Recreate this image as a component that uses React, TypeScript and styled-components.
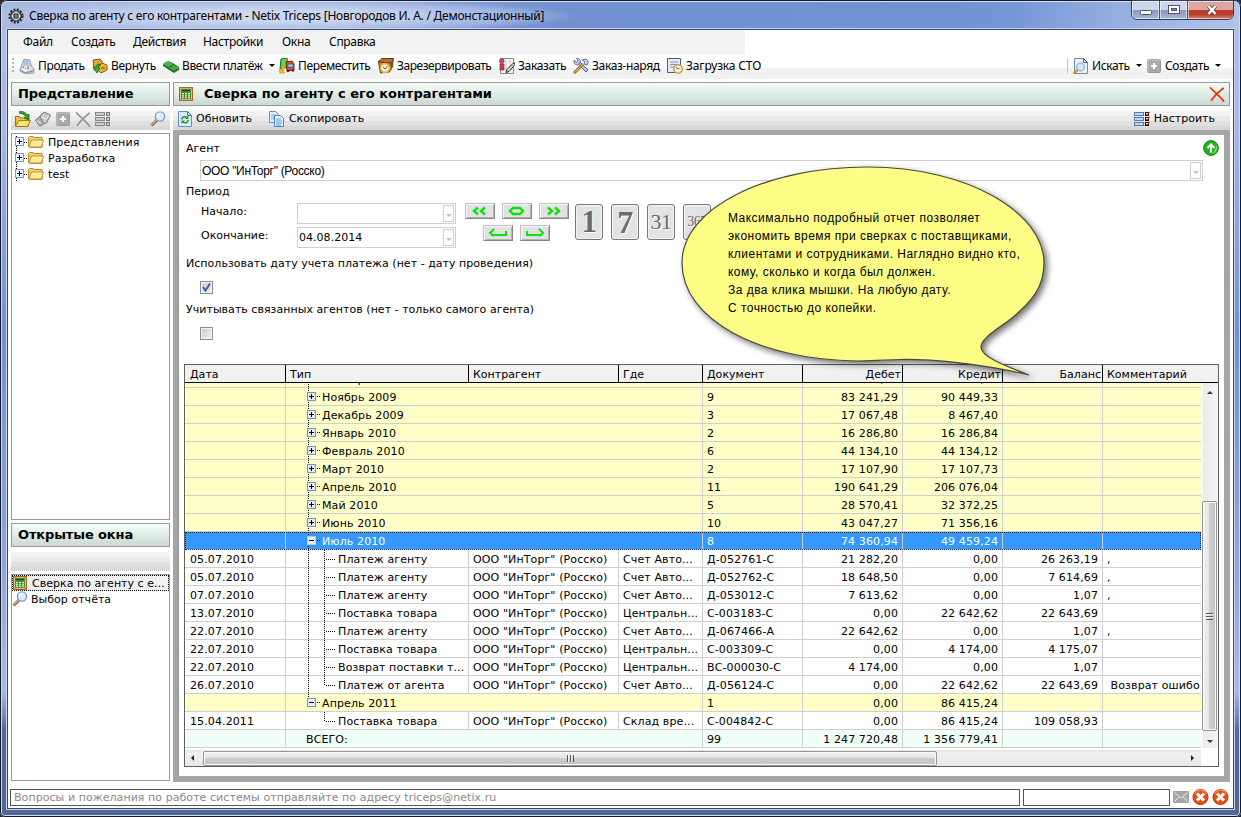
import React from 'react';
import styled, { createGlobalStyle, css } from 'styled-components';

const verdana = `'DejaVu Sans', Verdana, sans-serif`;
const segoe = `'Noto Sans', 'Segoe UI', sans-serif`;

const GlobalStyle = createGlobalStyle`
  *, *::before, *::after { box-sizing: border-box; }
  body { margin: 0; overflow: hidden; font: 11px/16px ${verdana}; letter-spacing: 0.03px; color: #000; }
  svg { display: block; flex: none; }
`;

/* ---------- window frame ---------- */
const Frame = styled.div`
  position: relative;
  width: 1241px;
  height: 817px;
  display: flex;
  flex-direction: column;
  background: linear-gradient(180deg, #afbfe6 0, #a7b9e4 120px, #7290d4 330px, #8ea6da 560px, #a9badd 690px, #52699b 730px, #526894 817px);
  border: 1px solid #141828;
  border-radius: 7px 7px 5px 5px;
  box-shadow: inset 0 0 0 1px #cfdaf2, 0 0 0 6px #20253a;
`;
const TitleBar = styled.header`
  height: 28px;
  margin: 0 1px;
  padding-left: 6px;
  display: flex;
  align-items: center;
  border-top: 1px solid #d8e2f6;
  border-radius: 6px 6px 0 0;
  background:
    linear-gradient(100deg, transparent 82%, #ffffff20 88%, #ffffff50 100%),
    radial-gradient(ellipse 310px 17px at 270px 14px, #ccd7f0 30%, #bccaeb90 78%, transparent 100%),
    linear-gradient(90deg, #a9b9e0 0, #92a8dc 340px, #7090d0 560px, #7193d4 960px, #8ea8de 100%);
`;
const TitleText = styled.div`
  flex: 1;
  padding-left: 5px;
  font: 12px/20px ${segoe};
  letter-spacing: -0.24px;
  white-space: nowrap;
`;
const WindowButtons = styled.div`
  display: flex;
  align-self: flex-start;
  width: 103px;
  height: 20px;
  margin: -2px 5px 0 0;
  border: 1px solid #343f58;
  border-radius: 0 0 6px 6px;
  overflow: hidden;
`;
const WindowButton = styled.div<{ $close?: boolean }>`
  width: ${p => (p.$close ? 47 : 28)}px;
  flex: none;
  display: grid;
  place-items: center;
  border-right: ${p => (p.$close ? 0 : '1px solid #46536f')};
  box-shadow: inset 0 0 0 1px #ffffff90;
  background: ${p =>
    p.$close
      ? 'linear-gradient(#dda79f 0 48%, #c0392b 50%, #b9402d 75%, #d88468)'
      : 'linear-gradient(#cdd6ea 0 48%, #8797bb 50%, #a9b8d8)'};
`;
const Client = styled.div`
  height: 780px;
  margin: 0 6px 0 6px;
  display: flex;
  flex-direction: column;
  background: #fff;
  border: 1px solid #3b4766;
  box-shadow: 0 0 0 1px #c6d2ee;
`;

/* ---------- menu and main toolbar ---------- */
const MenuBar = styled.nav`
  width: 737px;
  height: 24px;
  display: flex;
  background: #f2f2f2;
  font: 12px/24px ${segoe};
  letter-spacing: -0.3px;
  padding-left: 15px;
`;
const MenuItem = styled.div<{ $w: number }>`
  width: ${p => p.$w}px;
  white-space: nowrap;
`;
const MainToolbar = styled.div`
  height: 25px;
  display: flex;
  align-items: center;
  padding: 0 0 2px 4px;
  background: linear-gradient(#fff 0 14px, #f2f2f2 14px);
`;
const Grip = styled.div`
  width: 2px;
  height: 16px;
  margin-right: 5px;
  background: repeating-linear-gradient(#b4b4b4 0 2px, transparent 2px 4px);
`;
const ToolButton = styled.div<{ $w: number; $ls?: number }>`
  width: ${p => p.$w}px;
  height: 22px;
  display: flex;
  align-items: center;
  gap: 3px;
  font: 12px/22px ${segoe};
  letter-spacing: ${p => p.$ls ?? -0.35}px;
  white-space: nowrap;
`;
const Caret = styled.i`
  margin-left: 3px;
  border: 3px solid transparent;
  border-top-color: #000;
  border-bottom: 0;
`;
const Divider = styled.div`
  width: 1px;
  height: 16px;
  margin: 0 5px 0 auto;
  background: #c4c4c4;
`;

/* ---------- panels ---------- */
const Workspace = styled.main`
  display: flex;
  gap: 3px;
  padding: 3px 3px 0;
`;
const Column = styled.section<{ $w: number }>`
  width: ${p => p.$w}px;
  height: 700px;
  display: flex;
  flex-direction: column;
`;
const PanelHeader = styled.h2<{ $flush?: boolean }>`
  height: 24px;
  margin: 0 0 5px;
  padding: 0 ${p => (p.$flush ? '4px 0 5px' : '6px')};
  display: flex;
  flex: none;
  align-items: center;
  gap: 11px;
  border: 1px solid #999;
  background: linear-gradient(#f2fdf9, #eaf5f0 25%, #cbd8d1);
  font: bold 13px/22px ${verdana};
  letter-spacing: ${p => (p.$flush ? -0.02 : -0.12)}px;
  white-space: nowrap;
`;
const PanelTools = styled.div<{ $left?: number }>`
  height: 19px;
  display: flex;
  flex: none;
  align-items: center;
  gap: 4px;
  padding: 0 4px 3px ${p => p.$left ?? 4}px;
  background: linear-gradient(#f3f3f3 0 5px, #ebebeb 5px 10px, #e0e0e0 10px 15px, #d8d8d8 15px);
`;
const Spacer = styled.div`flex: 1;`;
const ToolLabel = styled.span<{ $gap?: number }>`
  margin-right: ${p => p.$gap ?? 0}px;
  letter-spacing: 0;
`;
const ListBox = styled.div<{ $h: number }>`
  height: ${p => p.$h}px;
  flex: none;
  margin: 3px 0;
  border: 1px solid #9a9a9a;
  background: #fff;
  &:last-child { margin-bottom: 0; }
`;
const FolderRow = styled.div`
  height: 16px;
  display: flex;
  align-items: center;
  padding-left: 3px;
  letter-spacing: 0.1px;
  span { padding: 1px 0 0 3px; }
`;
const OpenItem = styled.div<{ $active?: boolean }>`
  height: 16px;
  display: flex;
  align-items: center;
  gap: ${p => (p.$active ? 5 : 3)}px;
  line-height: 15px;
  white-space: nowrap;
  ${p => p.$active && css`
    background: #f0f0f0;
    border: 1px dotted #000;
  `}
`;
const ReportFrame = styled.div`
  flex: 1;
  padding: 5px 6px 6px 5px;
  background: #a6a6a6;
`;
const ReportBody = styled.div`
  height: 641px;
  padding: 0 5px 0 6px;
  border: 1px solid #8f8f8f;
  border-width: 0 0 0 1px;
  background: #fff;
`;

/* ---------- form ---------- */
const Line = styled.div<{ $h: number; $indent?: number }>`
  height: ${p => p.$h}px;
  display: flex;
  align-items: center;
  padding-left: ${p => p.$indent ?? 1}px;
  white-space: nowrap;
`;
const FieldLabel = styled.span`padding-top: 2px;`;
const Combo = styled.div<{ $w: number }>`
  width: ${p => p.$w}px;
  height: 21px;
  display: flex;
  align-items: center;
  justify-content: space-between;
  padding: 0 1px;
  border: 1px solid #cfcfcf;
  background: #fff;
`;
const AgentValue = styled.span`
  font: 12px/18px 'Liberation Sans', Arial, sans-serif;
  letter-spacing: -0.3px;
`;
const DropButton = styled.span`
  width: 11px;
  height: 17px;
  display: grid;
  place-items: center;
  border: 1px solid #cfcfcf;
  &::after {
    content: '';
    margin-top: 4px;
    border: 3px solid transparent;
    border-top-color: #c4c4c4;
    border-bottom: 0;
  }
`;
const PeriodBlock = styled.div`
  height: 47px;
  display: flex;
`;
const DateFields = styled.div`
  width: 287px;
  display: grid;
  grid-template-columns: 112px 159px;
  grid-auto-rows: 24px;
`;
const DateLabel = styled.span`
  padding-left: 16px;
  line-height: 18px;
`;
const StepButtons = styled.div`
  width: 105px;
  display: flex;
  flex-wrap: wrap;
  justify-content: center;
  align-content: flex-start;
  gap: 6px 7px;
  margin-left: -8px;
`;
const StepButton = styled.button`
  width: 30px;
  height: 16px;
  padding: 0;
  display: grid;
  place-items: center;
  background: #e2e2e2;
  border: 1px solid;
  border-color: #c0c0c0 #858585 #858585 #c0c0c0;
  box-shadow: inset 1px 1px #f6f6f6, inset -1px -1px #b4b4b4;
`;
const DayButtons = styled.div`
  display: flex;
  gap: 8px;
  padding: 1px 0 0 6px;
`;
const DayButton = styled.div<{ $size: number; $bold?: boolean }>`
  width: 28px;
  height: 36px;
  display: grid;
  place-items: center;
  border: 1px solid #777;
  border-radius: 3px;
  background: #e3e3e3;
  box-shadow: inset 0 0 0 1px #f4f4f4;
  font: ${p => (p.$bold ? 'bold' : 'normal')} ${p => p.$size}px/30px 'Liberation Serif', serif;
  color: #6a6a6a;
  text-shadow: 1px 1px #fff;
  letter-spacing: -0.5px;
`;
const CheckBox = styled.span`
  width: 13px;
  height: 13px;
  display: grid;
  place-items: center;
  border: 1px solid #8e8f8f;
  box-shadow: inset 0 0 0 1px #f4f4f4;
  background: linear-gradient(135deg, #c4cad0, #f2f4f6);
`;

/* ---------- table ---------- */
const Table = styled.div`
  width: 1035px;
  height: 403px;
  margin: 22px 0 0 -1px;
  border: 1px solid #606060;
  background: #fff;
`;
const columns = css`
  display: grid;
  grid-template-columns: 101px 183px 150px 84px 100px 100px 100px 100px 1fr;
`;
const HeadRow = styled.div`
  ${columns}
  height: 18px;
  background: #f1f1f1;
  border-bottom: 1px solid #000;
`;
const HeadCell = styled.div<{ $right?: boolean; $last?: boolean }>`
  padding: 1px ${p => (p.$right ? 1 : 4)}px 0 4px;
  line-height: 17px;
  text-align: ${p => (p.$right ? 'right' : 'left')};
  border-right: ${p => (p.$last ? 0 : '1px solid #000')};
  &:first-child { padding-left: 5px; }
`;
const Viewport = styled.div`
  display: flex;
  height: 365px;
`;
const Rows = styled.div`
  width: 1016px;
  overflow: hidden;
  display: flex;
  flex-direction: column;
  justify-content: flex-end;
`;
type Kind = 'group' | 'item' | 'selected' | 'total';
const rowBg: Record<Kind, string> = { group: '#ffffc8', item: '#fff', selected: '#3399ff', total: '#f1fff9' };
const DataRow = styled.div<{ $kind: Kind }>`
  ${columns}
  height: 18px;
  flex: none;
  background: ${p => rowBg[p.$kind]};
  color: ${p => (p.$kind === 'selected' ? '#fff' : '#000')};
  ${p => p.$kind === 'selected' && css`
    outline: 1px dotted #10243c;
    outline-offset: -1px;
  `}
`;
const Cell = styled.div<{ $right?: boolean; $span?: number }>`
  grid-column: span ${p => p.$span ?? 1};
  height: 18px;
  min-width: 0;
  padding: 0 4px;
  display: flex;
  justify-content: ${p => (p.$right ? 'flex-end' : 'flex-start')};
  line-height: 19px;
  letter-spacing: 0.11px;
  white-space: pre;
  overflow: hidden;
  border-right: 1px solid #cfcfcf;
  border-bottom: 1px solid #cfcfcf;
  &:first-child { padding-left: 5px; }
  &:last-child { border-right: 0; padding-right: 0; }
`;
const TypeCell = styled(Cell)`padding-left: 0;`;
const TotalLabel = styled.span`padding-left: 20px;`;
const VScroll = styled.div`
  width: 17px;
  padding: 0 1px;
  display: flex;
  flex-direction: column;
  align-items: center;
  background: linear-gradient(90deg, #fff 1px, #ececec 2px, #f4f4f4);
`;
const HScroll = styled.div`
  width: 1016px;
  height: 16px;
  margin-top: 2px;
  display: flex;
  align-items: center;
  background: linear-gradient(#e4e4e4, #f0f0f0 3px, #e9e9e9);
`;
const Arrow = styled.i<{ $dir: 'up' | 'down' | 'left' | 'right' }>`
  width: 0;
  height: 0;
  flex: none;
  border: 3px solid transparent;
  ${p => p.$dir === 'up' && 'margin: 8px 0 107px; border-width: 0 3px 3px; border-bottom-color: #333;'}
  ${p => p.$dir === 'down' && 'margin: 9px 0 0; border-width: 3px 3px 0; border-top-color: #333;'}
  ${p => p.$dir === 'left' && 'margin: 0 9px 0 6px; border-width: 3px 3px 3px 0; border-right-color: #222;'}
  ${p => p.$dir === 'right' && 'margin: 0 7px 0 auto; border-width: 3px 0 3px 3px; border-left-color: #222;'}
`;
const Thumb = styled.div<{ $vertical?: boolean }>`
  width: ${p => (p.$vertical ? 15 : 734)}px;
  height: ${p => (p.$vertical ? 230 : 15)}px;
  flex: none;
  display: grid;
  place-items: center;
  border: 1px solid #979797;
  border-radius: 2px;
  box-shadow: inset 0 0 0 1px #fafafa;
  background: linear-gradient(${p => (p.$vertical ? '90deg' : '180deg')}, #f3f3f3, #e4e4e4 45%, #cdcdcd 50%, #c2c2c2);
  &::after {
    content: '';
    width: 7px;
    height: 7px;
    background: repeating-linear-gradient(${p => (p.$vertical ? '180deg' : '90deg')}, #555 0 1px, #f4f4f4 1px 2px, transparent 2px 3px);
  }
`;

/* ---------- status bar ---------- */
const StatusBar = styled.footer`
  height: 26px;
  display: flex;
  align-items: center;
  gap: 3px;
  padding: 4px 4px 0 2px;
`;
const StatusField = styled.div<{ $w: number }>`
  width: ${p => p.$w}px;
  height: 17px;
  padding-left: 3px;
  border: 1px solid #555;
  color: #8a8a8a;
  line-height: 15px;
  letter-spacing: 0.06px;
`;

/* ---------- balloon ---------- */
const Balloon = styled.div`
  position: absolute;
  left: 669px;
  top: 155px;
  width: 400px;
  height: 235px;
`;
const BalloonShape = styled.svg`
  position: absolute;
  inset: 0;
  overflow: visible;
  filter: drop-shadow(3px 3px 3px #00000090);
`;
const BalloonText = styled.p`
  position: relative;
  margin: 0;
  padding: 53px 0 0 58px;
  font: 12px/18px 'Liberation Sans', Arial, sans-serif;
  letter-spacing: 0.47px;
  white-space: pre;
`;

/* ---------- icons ---------- */
const Svg = ({ children, w = 16, h = 16 }: { children: React.ReactNode; w?: number; h?: number }) => (
  <svg width={w} height={h} viewBox={`0 0 ${w} ${h}`}>{children}</svg>
);
const GearIcon = () => (
  <Svg>
    <circle cx="8" cy="8" r="6.300" fill="none" stroke="#333" strokeWidth="2.600" strokeDasharray="2 1.300" />
    <circle cx="8" cy="8" r="5" fill="#b4b8c0" stroke="#333" strokeWidth="1.200" />
    <circle cx="8" cy="8" r="2.400" fill="#777" stroke="#222" />
    <path d="M8 3.500v2M8 10.500v2M3.500 8h2M10.500 8h2" stroke="#fff" />
  </Svg>
);
const RegisterIcon = () => (
  <Svg>
    <path d="M3 6l2-5 6 1 1 5 3 4v4l-9 1-5-3 1-4z" fill="#c9ced4" stroke="#9aa0a8" />
    <path d="M5 3l4-1 1 4-5 1z" fill="#9ec4ea" />
    <path d="M2 11l5-3 7 2-8 4z" fill="#eef1f4" />
    <path d="M4 10l1-1M6 11l1-1M8 11l2-1M8 9l2 .4" stroke="#777" />
    <path d="M1.500 12.500l5 2.500 8-2" fill="none" stroke="#868c94" />
  </Svg>
);
const ReturnIcon = () => (
  <Svg>
    <path d="M1 2l7-1 2 2v8l-8 1z" fill="#dca83c" stroke="#8c5a12" />
    <path d="M7 8l3-3 5 2v5l-6 3-3-3z" fill="#f2b53e" stroke="#8c5a12" />
    <ellipse cx="11" cy="10" rx="2.500" ry="1.500" fill="#c47f1c" />
    <path d="M7 6C5 6 4 8 4 9H1l4 6 3-5H6c0-1 1-3 3-3z" fill="#3cae2a" stroke="#176f10" strokeWidth=".8" />
  </Svg>
);
const MoneyIcon = () => (
  <Svg>
    <path d="M0 8V6l5-3 5 2 6 4v3l-5 3-5-3z" fill="#1f7a2a" />
    <path d="M0 6l5-3 5 3-4 3z" fill="#4fb452" />
    <path d="M6 10l5-3 5 2.500-5 3z" fill="#45ab48" />
  </Svg>
);
const TruckIcon = () => (
  <Svg>
    <path d="M2 1l6-1 1 9-8 2z" fill="#4cc43c" stroke="#1c7414" />
    <path d="M4 1v9M6 1v8" stroke="#88e272" />
    <path d="M7 4l6-1 2 3v6l-7 1z" fill="#e04632" stroke="#8c1d12" />
    <path d="M9 6h5v3l-5 .5z" fill="#a5c8e8" stroke="#364a68" strokeWidth=".6" />
    <circle cx="9" cy="13" r="1.300" fill="#333" /><circle cx="14" cy="12.500" r="1.200" fill="#333" />
    <path d="M5.500 10c-3-1-3 3-1 3M5 12H1v2.500h5" fill="none" stroke="#e8ac20" strokeWidth="1.800" />
  </Svg>
);
const ReserveIcon = () => (
  <Svg>
    <path d="M0 4l4-3.500h11.500L13 5z" fill="#b4713a" stroke="#6c3c14" />
    <path d="M.500 4l12 1-1 9-9 1z" fill="#d08d48" stroke="#6c3c14" />
    <path d="M13 5l3-5-1 9-3 5z" fill="#8a4f1e" />
    <circle cx="7" cy="10" r="4.400" fill="#eef3e0" stroke="#eeb42c" strokeWidth="1.600" />
    <path d="M7 11l2.500-3M7 11L5 9" stroke="#555" />
  </Svg>
);
const OrderIcon = () => (
  <Svg>
    <path d="M1.500.500h13v15h-13z" fill="#f4f4f4" stroke="#8a8a8a" />
    <path d="M7 2v11M11 2v9" stroke="#c4c4c4" />
    <circle cx="2.800" cy="3" r="2.300" fill="#c85060" stroke="#8c2438" strokeWidth=".7" />
    <path d="M1 6h4v6H1z" fill="#b84454" stroke="#8c2438" strokeWidth=".7" />
    <path d="M15 4.500l-7 7-1 3 3-1 6-7z" fill="#ddd" stroke="#222" />
  </Svg>
);
const WrenchIcon = () => (
  <Svg>
    <path d="M4 5l9 9 2-2-9-9" fill="#b9c0ee" stroke="#5058a0" strokeWidth=".9" />
    <path d="M1 2l2.500 2.500L5 2 3.500.500C6 0 8 2 7 5L4.500 7C2 7 .500 5 1 2zM9 2l4-1 2.500 3L14 7l-3-1 1-2z" fill="#c8cdf5" stroke="#5860a8" strokeWidth=".9" />
    <path d="M10 6l-9 9" stroke="#8c5a12" strokeWidth="3" /><path d="M10 6l-8.500 8.500" stroke="#e8b040" strokeWidth="1.400" />
  </Svg>
);
const LoadIcon = () => (
  <Svg>
    <path d="M.500.500h13v14H.500z" fill="#e6edf8" stroke="#4c5e86" />
    <path d="M3 4h8M3 6.500h8M3 9h5" stroke="#8494b2" />
    <circle cx="11" cy="11" r="4.200" fill="#f5f6f8" stroke="#e0962c" strokeWidth="1.500" />
    <path d="M9 9.500l2 1.500 1.500-1" fill="none" stroke="#555" />
  </Svg>
);
const FindDocIcon = () => (
  <Svg>
    <path d="M1.500.500h9l4 4v11h-13z" fill="#eaf2fc" stroke="#6a8cb8" />
    <path d="M10.500.500v4h4z" fill="#fff" stroke="#3a5a88" />
    <circle cx="7.500" cy="9" r="3.900" fill="#cfe6fa" stroke="#9ab4d0" strokeWidth="1.300" />
    <path d="M4.500 12L.500 16" stroke="#d89028" strokeWidth="2.600" />
  </Svg>
);
const PlusIcon = () => (
  <Svg>
    <rect x="1.500" y="1.500" width="13" height="13" rx="1" fill="#a9a9a9" stroke="#9a9a9a" />
    <path d="M2 14V2h12" fill="none" stroke="#c6c6c6" />
    <path d="M8 5v6M5 8h6" stroke="#fff" strokeWidth="2" />
  </Svg>
);
const OpenFolderIcon = () => (
  <Svg>
    <path d="M.500 5.500h4l1 1.500h8v8H.500z" fill="#f0c444" stroke="#9c7010" />
    <path d="M.500 15.500l3-6h12l-3 6z" fill="#ffe07a" stroke="#a87c14" />
    <path d="M4.500.500C9 0 11 2 12 4l2-1v6L9 7l1.500-1.500C9 3.500 8 2.500 4.500 2.500z" fill="#2ea030" stroke="#146a18" strokeWidth=".8" />
  </Svg>
);
const BooksIcon = () => (
  <Svg>
    <path d="M.500 9l6-5 5 3-4 7-3 1z" fill="#b4b4b4" stroke="#777" />
    <path d="M5 5l4-4 6.500 3-4 8-3 1z" fill="#c8c8c8" stroke="#777" />
    <path d="M6 6l5 2 3-4M1.500 10l4 2" fill="none" stroke="#f2f2f2" />
  </Svg>
);
const CrossIcon = ({ red }: { red?: boolean }) => (
  <Svg>
    <path d="M1.500 2c4 4 9 8 13 13M14 2.500C9 6 6 9 2.500 14" fill="none" stroke={red ? '#e8330c' : '#969696'} strokeWidth="1.700" strokeLinecap="square" />
  </Svg>
);
const ListIcon = ({ color }: { color?: boolean }) => (
  <Svg>
    {[2, 7, 12].map(y => (
      <g key={y}>
        <rect x=".500" y={y - 0.5} width="9" height="3" fill={color ? '#c4d6f4' : '#ccc'} stroke={color ? '#5a78b0' : '#888'} />
        <rect x="11.500" y={y - 0.5} width="3" height="3" fill={color ? '#fff' : '#ccc'} stroke={color ? '#111' : '#777'} />
        {color && <path d={`M12 ${y + 1}l1 1 3-3.500`} fill="none" stroke="#e8330c" strokeWidth="1" />}
      </g>
    ))}
  </Svg>
);
const MagnifierIcon = () => (
  <Svg>
    <path d="M7 9L1.500 14.500" stroke="#8a5a3a" strokeWidth="3" /><path d="M6.500 9L1.500 14" stroke="#e6a468" strokeWidth="1.600" />
    <circle cx="10" cy="5.500" r="4.600" fill="#d8ecfc" stroke="#7a9cd4" strokeWidth="1.400" />
    <path d="M7.500 5a3 3 0 0 1 3-2.500" fill="none" stroke="#fff" strokeWidth="1.400" />
  </Svg>
);
const CalcIcon = () => (
  <Svg w={14} h={14}>
    <path d="M.7.700h12.600v12.600H.700z" fill="#fffbe0" stroke="#b0651c" strokeWidth="1.400" />
    <path d="M2 2h10v10H2z" fill="#3d8c3a" />
    <path d="M3 3h8v1H3z" fill="#0c4c10" />
    <path d="M3 6h2v1.300H3zM6 6h2v1.300H6zM9 6h2v1.300H9zM3 8.200h2v1.300H3zM6 8.200h2v1.300H6zM9 8.200h2v1.300H9zM3 10.300h2v1H3zM6 10.300h2v1H6zM9 10.300h2v1H9z" fill="#f6f8b8" />
  </Svg>
);
const RefreshIcon = () => (
  <Svg w={14}>
    <path d="M.500.500h9l4 4v11H.500z" fill="#dcebfb" stroke="#5d92cc" />
    <path d="M9.500.500v4h4z" fill="#fff" stroke="#3f70aa" />
    <path d="M3.800 8.500c0-3 3.500-3.500 5-2M10.200 9c0 3-3.500 3.500-5 2" fill="none" stroke="#259425" strokeWidth="1.500" />
    <path d="M10.500 4.500V8H7zM3.500 13V9.500H7z" fill="#259425" />
  </Svg>
);
const CopyIcon = () => (
  <Svg>
    <path d="M.500.500h6l3 3v8h-9z" fill="#e4f0fd" stroke="#5c8fc8" /><path d="M2 4h5M2 6h5M2 8h3" stroke="#78aade" />
    <path d="M5.500 4.500h6l3 3v8h-9z" fill="#eaf4fe" stroke="#4c80bc" /><path d="M7 8h5M7 10h6M7 12h6M7 14h5" stroke="#5c9ad8" />
  </Svg>
);
const UpIcon = () => (
  <Svg>
    <circle cx="8" cy="8" r="7.400" fill="#22b422" stroke="#128012" />
    <path d="M14 5c1 4-1 8-5 9 3-3 4-6 5-9z" fill="#8be07c" />
    <path d="M8 12.500V5M4.500 8L8 4.500 11.500 8" fill="none" stroke="#fff" strokeWidth="2" />
  </Svg>
);
const ErrorIcon = () => (
  <Svg w={17}>
    <circle cx="8.500" cy="8" r="7.500" fill="#ee4a14" stroke="#bb2f0a" />
    <path d="M2.500 5a6.500 6.500 0 0 1 12 0" fill="none" stroke="#ffa070" />
    <path d="M5 4.500l7 7M12 4.500l-7 7" stroke="#fff" strokeWidth="3" />
  </Svg>
);
const MailIcon = () => (
  <Svg h={12}>
    <path d="M.500.500h15v11H.500z" fill="#a8a8a8" stroke="#a4a4a4" />
    <path d="M1.500 1.500L8 7l6.500-5.500M1.500 10.500L6 6M14.500 10.500L10 6" fill="none" stroke="#e8e8e8" />
  </Svg>
);
const FolderTreeIcon = ({ first }: { first?: boolean }) => (
  <svg width="30" height="16" viewBox="0 0 30 16" shapeRendering="crispEdges">
    <path d={first ? 'M1.500 2v14' : 'M1.500 0v16'} stroke="#000" strokeDasharray="1 1" />
    <path d="M9 8.500h3" stroke="#000" strokeDasharray="1 1" />
    <rect x=".500" y="3.500" width="8" height="8" fill="#eef2f8" stroke="#7a9ac8" />
    <path d="M2 7.500h5M4.500 5v5" stroke="#000" />
    <path d="M13.500 12.500v-9l1-1h4l1 1h7l1 2v7l-1 1h-12z" fill="#f6d064" stroke="#b58a24" shapeRendering="auto" />
    <path d="M14 13l2.500-7h12l-2 7z" fill="#ffeaa0" stroke="#c29a34" shapeRendering="auto" />
  </svg>
);

/* Branch lines and expander drawn before a type name */
const BranchIcon = ({ level, open, last, cont, white }: { level: 1 | 2; open?: boolean; last?: boolean; cont?: boolean; white?: boolean }) => (
  <svg width={level === 1 ? 36 : 52} height="18" viewBox={`0 0 ${level === 1 ? 36 : 52} 18`} shapeRendering="crispEdges">
    {cont && <path d="M22.500 0v18" stroke="#000" strokeDasharray="1 1" />}
    {level === 1 ? (
      <>
        {!cont && <path d="M22.500 0v4" stroke="#000" strokeDasharray="1 1" />}
        <path d="M31 8.500h3" stroke="#000" strokeDasharray="1 1" />
        <rect x="21.500" y="4.500" width="8" height="8" fill="#e8edf5" stroke={white ? '#c8c8c8' : '#6f94c8'} />
        <path d={open ? 'M23 8.500h5' : 'M23 8.500h5M25.500 6v5'} stroke="#000" />
      </>
    ) : (
      <>
        <path d={last ? 'M38.500 0v10' : 'M38.500 0v18'} stroke="#000" strokeDasharray="1 1" />
        <path d="M40 9.500h10" stroke="#000" strokeDasharray="1 1" />
      </>
    )}
  </svg>
);

/* ---------- data ---------- */
const groups: string[][] = [
  ['Октябрь 2009', '', '0,00', '0,00'],
  ['Ноябрь 2009', '9', '83 241,29', '90 449,33'],
  ['Декабрь 2009', '3', '17 067,48', '8 467,40'],
  ['Январь 2010', '2', '16 286,80', '16 286,84'],
  ['Февраль 2010', '6', '44 134,10', '44 134,12'],
  ['Март 2010', '2', '17 107,90', '17 107,73'],
  ['Апрель 2010', '11', '190 641,29', '206 076,04'],
  ['Май 2010', '5', '28 570,41', '32 372,25'],
  ['Июнь 2010', '10', '43 047,27', '71 356,16'],
];
const agent = 'ООО "ИнТорг" (Росско)';
const items: string[][] = [
  ['05.07.2010', 'Платеж агенту', 'Счет Авто...', 'Д-052761-С', '21 282,20', '0,00', '26 263,19', ','],
  ['05.07.2010', 'Платеж агенту', 'Счет Авто...', 'Д-052762-С', '18 648,50', '0,00', '7 614,69', ','],
  ['07.07.2010', 'Платеж агенту', 'Счет Авто...', 'Д-053012-С', '7 613,62', '0,00', '1,07', ','],
  ['13.07.2010', 'Поставка товара', 'Центральн...', 'С-003183-С', '0,00', '22 642,62', '22 643,69', ''],
  ['22.07.2010', 'Платеж агенту', 'Счет Авто...', 'Д-067466-А', '22 642,62', '0,00', '1,07', ','],
  ['22.07.2010', 'Поставка товара', 'Центральн...', 'С-003309-С', '0,00', '4 174,00', '4 175,07', ''],
  ['22.07.2010', 'Возврат поставки т...', 'Центральн...', 'ВС-000030-С', '4 174,00', '0,00', '1,07', ''],
  ['26.07.2010', 'Платеж от агента', 'Счет Авто...', 'Д-056124-С', '0,00', '22 642,62', '22 643,69', ' Возврат ошибо'],
];

const GroupRow = ({ data, open, selected, end }: { data: string[]; open?: boolean; selected?: boolean; end?: boolean }) => (
  <DataRow $kind={selected ? 'selected' : 'group'}>
    <Cell />
    <TypeCell $span={3}><BranchIcon level={1} open={open} cont={!end} white={selected} />{data[0]}</TypeCell>
    <Cell>{data[1]}</Cell>
    <Cell $right>{data[2]}</Cell>
    <Cell $right>{data[3]}</Cell>
    <Cell />
    <Cell />
  </DataRow>
);
const ItemRow = ({ data, last, cont }: { data: string[]; last?: boolean; cont?: boolean }) => (
  <DataRow $kind="item">
    <Cell>{data[0]}</Cell>
    <TypeCell><BranchIcon level={2} last={last} cont={cont} />{data[1]}</TypeCell>
    <Cell>{agent}</Cell>
    <Cell>{data[2]}</Cell>
    <Cell>{data[3]}</Cell>
    <Cell $right>{data[4]}</Cell>
    <Cell $right>{data[5]}</Cell>
    <Cell $right>{data[6]}</Cell>
    <Cell>{data[7]}</Cell>
  </DataRow>
);

const green = { fill: 'none', stroke: '#0be40b', strokeWidth: 2.4 };

export default function App() {
  return (
    <>
      <GlobalStyle />
      <Frame>
        <TitleBar>
          <GearIcon />
          <TitleText>Сверка по агенту с его контрагентами - Netix Triceps [Новгородов И. А. / Демонстационный]</TitleText>
          <WindowButtons>
            <WindowButton><Svg w={12} h={12}><rect x=".500" y="6.500" width="11" height="4" rx="1" fill="#fff" stroke="#4a556d" /></Svg></WindowButton>
            <WindowButton><Svg w={12} h={12}><rect x=".500" y="1.500" width="11" height="8" fill="#fff" stroke="#4a556d" /><rect x="3.500" y="4.500" width="5" height="2" fill="#8797bb" stroke="#4a556d" /></Svg></WindowButton>
            <WindowButton $close><Svg w={12} h={12}><path d="M2.500 2l7 8M9.500 2l-7 8" stroke="#5a3a40" strokeWidth="4" /><path d="M2.500 2l7 8M9.500 2l-7 8" stroke="#fff" strokeWidth="2.400" /></Svg></WindowButton>
          </WindowButtons>
        </TitleBar>
        <Client>
          <MenuBar>
            <MenuItem $w={48}>Файл</MenuItem>
            <MenuItem $w={62}>Создать</MenuItem>
            <MenuItem $w={70}>Действия</MenuItem>
            <MenuItem $w={79}>Настройки</MenuItem>
            <MenuItem $w={47}>Окна</MenuItem>
            <MenuItem $w={60}>Справка</MenuItem>
          </MenuBar>
          <MainToolbar>
            <Grip />
            <ToolButton $w={73}><RegisterIcon />Продать</ToolButton>
            <ToolButton $w={71}><ReturnIcon />Вернуть</ToolButton>
            <ToolButton $w={116}><MoneyIcon />Ввести платёж<Caret /></ToolButton>
            <ToolButton $w={99}><TruckIcon />Переместить</ToolButton>
            <ToolButton $w={121} $ls={-0.46}><ReserveIcon />Зарезервировать</ToolButton>
            <ToolButton $w={74}><OrderIcon />Заказать</ToolButton>
            <ToolButton $w={94}><WrenchIcon />Заказ-наряд</ToolButton>
            <ToolButton $w={100} $ls={-0.15}><LoadIcon />Загрузка СТО</ToolButton>
            <Divider />
            <ToolButton $w={73}><FindDocIcon />Искать<Caret /></ToolButton>
            <ToolButton $w={87}><PlusIcon />Создать<Caret /></ToolButton>
          </MainToolbar>
          <Workspace>
            <Column $w={159}>
              <PanelHeader>Представление</PanelHeader>
              <PanelTools>
                <OpenFolderIcon /><BooksIcon /><PlusIcon /><CrossIcon /><ListIcon />
                <Spacer />
                <MagnifierIcon />
              </PanelTools>
              <ListBox $h={387}>
                <FolderRow><FolderTreeIcon first /><span>Представления</span></FolderRow>
                <FolderRow><FolderTreeIcon /><span>Разработка</span></FolderRow>
                <FolderRow><FolderTreeIcon /><span>test</span></FolderRow>
              </ListBox>
              <PanelHeader>Открытые окна</PanelHeader>
              <PanelTools />
              <ListBox $h={207}>
                <OpenItem $active><CalcIcon />Сверка по агенту с е...</OpenItem>
                <OpenItem><MagnifierIcon />Выбор отчёта</OpenItem>
              </ListBox>
            </Column>
            <Column $w={1057}>
              <PanelHeader $flush>
                <CalcIcon />Сверка по агенту с его контрагентами
                <Spacer />
                <CrossIcon red />
              </PanelHeader>
              <PanelTools $left={5}>
                <RefreshIcon /><ToolLabel $gap={13}>Обновить</ToolLabel>
                <CopyIcon /><ToolLabel>Скопировать</ToolLabel>
                <Spacer />
                <ListIcon color /><ToolLabel $gap={11}>Настроить</ToolLabel>
              </PanelTools>
              <ReportFrame>
                <ReportBody>
                  <Line $h={25}><FieldLabel>Агент</FieldLabel><Spacer /><UpIcon /></Line>
                  <Line $h={21} $indent={15}><Combo $w={1003}><AgentValue>{agent}</AgentValue><DropButton /></Combo></Line>
                  <Line $h={22}>Период</Line>
                  <PeriodBlock>
                    <DateFields>
                      <DateLabel>Начало:</DateLabel><Combo $w={159}><span /><DropButton /></Combo>
                      <DateLabel>Окончание:</DateLabel><Combo $w={159}><span>04.08.2014</span><DropButton /></Combo>
                    </DateFields>
                    <StepButtons>
                      <StepButton><Svg w={19} h={10}><path d="M8 1.500L4 5l4 3.500M15 1.500L11 5l4 3.500" {...green} /></Svg></StepButton>
                      <StepButton><Svg w={19} h={10}><path d="M6 2h7l3 3-3 3H6L3 5z" {...green} /></Svg></StepButton>
                      <StepButton><Svg w={19} h={10}><path d="M4 1.500L8 5 4 8.500M11 1.500L15 5l-4 3.500" {...green} /></Svg></StepButton>
                      <StepButton><Svg w={20} h={10}><path d="M6 1L2 5l4 3M3 7h15V3" {...green} strokeWidth={2} /></Svg></StepButton>
                      <StepButton><Svg w={20} h={10}><path d="M14 1l4 4-4 3M17 7H2V3" {...green} strokeWidth={2} /></Svg></StepButton>
                    </StepButtons>
                    <DayButtons>
                      <DayButton $size={31} $bold>1</DayButton>
                      <DayButton $size={32} $bold>7</DayButton>
                      <DayButton $size={22}>31</DayButton>
                      <DayButton $size={14}>365</DayButton>
                      <DayButton $size={28}>∞</DayButton>
                    </DayButtons>
                  </PeriodBlock>
                  <Line $h={28}>Использовать дату учета платежа (нет - дату проведения)</Line>
                  <Line $h={18} $indent={15}>
                    <CheckBox><Svg w={11} h={11}><path d="M2 5l2.500 3.500L9 1.500" fill="none" stroke="#3f5f9e" strokeWidth="2" /></Svg></CheckBox>
                  </Line>
                  <Line $h={28}>Учитывать связанных агентов (нет - только самого агента)</Line>
                  <Line $h={18} $indent={15}><CheckBox /></Line>
                  <Table>
                    <HeadRow>
                      <HeadCell>Дата</HeadCell><HeadCell>Тип</HeadCell><HeadCell>Контрагент</HeadCell><HeadCell>Где</HeadCell>
                      <HeadCell>Документ</HeadCell><HeadCell $right>Дебет</HeadCell><HeadCell $right>Кредит</HeadCell>
                      <HeadCell $right>Баланс</HeadCell><HeadCell $last>Комментарий</HeadCell>
                    </HeadRow>
                    <Viewport>
                      <Rows>
                        {groups.map(g => <GroupRow key={g[0]} data={g} />)}
                        <GroupRow data={['Июль 2010', '8', '74 360,94', '49 459,24']} open selected />
                        {items.map((r, i) => <ItemRow key={i} data={r} cont last={i === items.length - 1} />)}
                        <GroupRow data={['Апрель 2011', '1', '0,00', '86 415,24']} open end />
                        <ItemRow data={['15.04.2011', 'Поставка товара', 'Склад вре...', 'С-004842-С', '0,00', '86 415,24', '109 058,93', '']} last />
                        <DataRow $kind="total">
                          <Cell />
                          <TypeCell $span={3}><TotalLabel>ВСЕГО:</TotalLabel></TypeCell>
                          <Cell>99</Cell>
                          <Cell $right>1 247 720,48</Cell>
                          <Cell $right>1 356 779,41</Cell>
                          <Cell />
                          <Cell />
                        </DataRow>
                      </Rows>
                      <VScroll><Arrow $dir="up" /><Thumb $vertical /><Arrow $dir="down" /></VScroll>
                    </Viewport>
                    <HScroll><Arrow $dir="left" /><Thumb /><Arrow $dir="right" /></HScroll>
                  </Table>
                </ReportBody>
              </ReportFrame>
            </Column>
          </Workspace>
          <StatusBar>
            <StatusField $w={1010}>Вопросы и пожелания по работе системы отправляйте по адресу triceps@netix.ru</StatusField>
            <StatusField $w={147} />
            <MailIcon /><ErrorIcon /><ErrorIcon />
          </StatusBar>
        </Client>
        <Balloon>
          <BalloonShape width="400" height="235" viewBox="670 156 400 235">
            <path
              d="M682 263C682 207 768 167 868 167C968 167 1044 213 1044 263C1044 288 1031 302 1012 318C998 329 981 338 981 347C981 356 1000 364 1029 375C980 363 930 359 900 359.500C880 360 870 361 857 361C760 360 682 320 682 263Z"
              fill="#ffff86" fillOpacity=".985" stroke="#4a4a38" strokeWidth="1.200"
            />
          </BalloonShape>
          <BalloonText>{`Максимально подробный отчет позволяет
экономить время при сверках с поставщиками,
клиентами и сотрудниками. Наглядно видно кто,
кому, сколько и когда был должен.
За два клика мышки. На любую дату.
С точностью до копейки.`}</BalloonText>
        </Balloon>
      </Frame>
    </>
  );
}
